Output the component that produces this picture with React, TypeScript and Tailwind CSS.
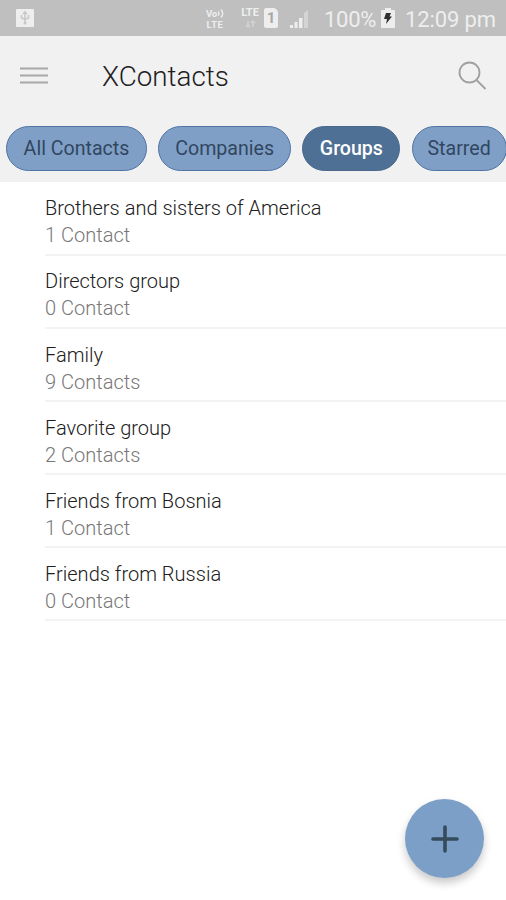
interface Group {
  name: string;
  count: number;
}

const groups: Group[] = [
  { name: "Brothers and sisters of America", count: 1 },
  { name: "Directors group", count: 0 },
  { name: "Family", count: 9 },
  { name: "Favorite group", count: 2 },
  { name: "Friends from Bosnia", count: 1 },
  { name: "Friends from Russia", count: 0 },
];

const tabs = [
  { label: "All Contacts", width: "w-[141px]" },
  { label: "Companies", width: "w-[133px]" },
  { label: "Groups", width: "w-[98px]" },
  { label: "Starred", width: "w-[95px]" },
];

function countLabel(count: number): string {
  return count + (count > 1 ? " Contacts" : " Contact");
}

function StatusBar() {
  return (
    <div className="flex h-9 items-center bg-[#bfbfbf] pl-4 pr-[10px] text-[#eeeeee]">
      <svg className="h-[18px] w-[18px]" viewBox="0 0 18 18" fill="none">
        <rect width="18" height="18" rx="1" fill="#eeeeee" />
        <path d="M9 4v10M5.5 6v3L9 10.5 12.5 9V6M7 5l2-2 2 2" stroke="#c8c8c8" strokeWidth="1.6" />
        <circle cx="9" cy="14" r="1.5" fill="#c8c8c8" />
      </svg>

      <div className="ml-[171px] flex w-5 flex-col items-center pt-[1px] text-[9.5px] font-bold leading-[11px]">
        <span className="flex h-[11px] items-center tracking-[-0.2px]">
          Vo
          <svg className="h-[9px] w-[7px]" viewBox="0 0 7 9" fill="none" stroke="currentColor" strokeWidth="1.3">
            <path d="M1 2.5q2 2 0 4M4 .5q3.5 4 0 8" />
          </svg>
        </span>
        <span className="h-[11px] tracking-[0.5px]">LTE</span>
      </div>

      <div className="ml-[15px] flex h-6 w-5 flex-col items-center text-[11px] font-bold leading-[13px]">
        <span>LTE</span>
        <svg className="mt-[1px] h-[8px] w-[11px] opacity-40" viewBox="0 0 11 8" fill="none" stroke="currentColor" strokeWidth="1.7">
          <path d="M3 1v6M1 5l2 2 2-2M8 7V1M6 3l2-2 2 2" />
        </svg>
      </div>

      <div className="ml-[4px] flex h-[20px] w-[14px] items-center justify-center rounded-[2px] rounded-tr-[5px] bg-[#eeeeee] text-[15px] font-bold text-[#a8a8a8]">
        1
      </div>

      <svg className="ml-[11px] h-[19px] w-[20px]" viewBox="0 0 20 19" fill="currentColor">
        <path d="M1 16h3v3H1zM5.5 13h3v6h-3zM10 9h3.5v10H10z" />
        <path d="M15 4l4-3v18h-4z" opacity=".45" />
      </svg>

      <span className="ml-[15px] w-[53px] whitespace-nowrap pt-[2px] text-[22px] tracking-[-0.3px]">100%</span>
      <svg className="ml-[4px] h-[20px] w-[14px]" viewBox="0 0 14 20">
        <path d="M4 0h6v2h3q1 0 1 1v16q0 1-1 1H1q-1 0-1-1V3q0-1 1-1h3z" fill="#eeeeee" />
        <path d="M5 5h5L8.5 8.5H11L5 16l1-5H3z" fill="#303030" />
      </svg>
      <span className="ml-auto whitespace-nowrap pt-[2px] text-[22px] tracking-[-0.1px]">12:09 pm</span>
    </div>
  );
}

function TopBar() {
  return (
    <div className="flex h-[81px] items-center pb-[2px] pl-5 pr-[19px]">
      <svg className="h-[17px] w-7" viewBox="0 0 28 17" stroke="#a8a8a8" strokeWidth="2">
        <path d="M0 1.5h28M0 8.5h28M0 15.5h28" />
      </svg>
      <h1 className="ml-[54px] pt-[3px] text-[27.8px] font-light text-[#202020]">XContacts</h1>
      <svg className="ml-auto h-[30px] w-[29px]" viewBox="0 0 29 30" fill="none" stroke="#a0a0a0" strokeWidth="1.8">
        <circle cx="11.5" cy="11.5" r="10" />
        <path d="M18.5 19 27.5 28" />
      </svg>
    </div>
  );
}

export default function App() {
  return (
    <div className="relative h-[900px] w-[506px] overflow-hidden bg-white font-['Roboto',sans-serif]">
      <header className="h-[182px] bg-[#f1f1f1]">
        <StatusBar />
        <TopBar />
        <nav className="flex gap-[11.2px] overflow-hidden pl-[6px] pt-[9px]">
          {tabs.map((tab) => (
            <button
              key={tab.label}
              className={"h-[45px] shrink-0 rounded-full border-[1.5px] text-[19.6px] " + tab.width + " " +
                (tab.label === "Groups"
                  ? "border-[#48698d] bg-[#4e7094] font-medium text-white"
                  : "border-[#4f74a3] bg-[#809fc7] text-[#30475f]")
              }
            >
              {tab.label}
            </button>
          ))}
        </nav>
      </header>

      <ul className="pl-[45px] pt-[0.6px]">
        {groups.map((group) => (
          <li key={group.name} className="h-[73.1px] border-b-2 border-[#f3f3f3] pt-[12.8px]">
            <p className="text-[20.05px] font-light leading-[27px] text-[#202020]">{group.name}</p>
            <p className="text-[20.05px] font-light leading-[27px] text-[#777777]">{countLabel(group.count)}</p>
          </li>
        ))}
      </ul>

      <button
        aria-label="Add group"
        className="absolute bottom-[22px] right-[22px] flex h-[79px] w-[79px] items-center justify-center rounded-full bg-[#7c9fc8] shadow-[0_5px_8px_rgba(0,0,0,0.22)]"
      >
        <svg className="h-7 w-7" viewBox="0 0 28 28" stroke="#344b5c" strokeWidth="3.6" strokeLinecap="round">
          <path d="M14 2v24M2 14h24" />
        </svg>
      </button>
    </div>
  );
}
